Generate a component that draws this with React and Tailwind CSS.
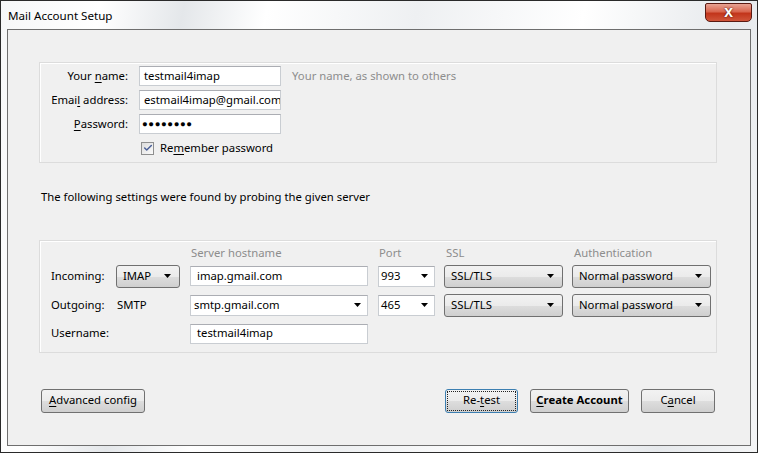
import { Check } from "lucide-react";

const font = "font-['Segoe_UI','Noto_Sans',sans-serif]";

const Arrow = () => (
  <svg width="7" height="4" viewBox="0 0 7 4" className="shrink-0">
    <path d="M0 0h7L3.5 4z" fill="#000" />
  </svg>
);

const U = ({ children }) => <span className="underline underline-offset-2">{children}</span>;

const TextBox = ({ value, className = "" }) => (
  <div className={`h-[20px] bg-white border border-[#c9cdd2] border-t-[#abadb3] px-[4px] flex items-center text-black ${className}`}>
    {value}
  </div>
);

const ComboBox = ({ value, className = "" }) => (
  <div className={`h-[21px] bg-white border border-[#c9cdd2] border-t-[#abadb3] pl-[2px] pr-[6px] flex items-center justify-between text-black ${className}`}>
    <span>{value}</span>
    <Arrow />
  </div>
);

const DropButton = ({ value, className = "" }) => (
  <div className={`h-[23px] rounded-[3px] border border-[#707070] bg-[linear-gradient(#f2f2f2_0%,#ebebeb_50%,#dddddd_51%,#cfcfcf_100%)] pl-[6px] pr-[8px] flex items-center justify-between text-black ${className}`}>
    <span>{value}</span>
    <Arrow />
  </div>
);

const Button = ({ children, className = "", focused }) => (
  <button
    className={`h-[24px] rounded-[3px] border ${focused ? "border-[#3c7fb1]" : "border-[#707070]"} bg-[linear-gradient(#f2f2f2_0%,#ebebeb_50%,#dddddd_51%,#cfcfcf_100%)] flex items-center justify-center text-black p-[2px] ${className}`}
  >
    <span className={`w-full h-full flex items-center justify-center ${focused ? "outline-1 outline-dotted outline-[#222]" : ""}`}>
      {children}
    </span>
  </button>
);

export default function App() {
  return (
    <div className={`${font} text-[11.3px] w-[758px] h-[453px] border border-[#2a2a2a] flex flex-col bg-[linear-gradient(100deg,#f6f7f8_0%,#ffffff_12%,#e4e7ea_22%,#ffffff_32%,#eef0f2_50%,#ffffff_70%,#e6e9ec_88%,#f4f5f6_100%)]`}>
      {/* title bar */}
      <div className="h-[28px] flex items-start justify-between pl-[7px] pr-[5px]">
        <div className="mt-[6px] text-[11.6px] text-black">Mail Account Setup</div>
        <div className="w-[47px] h-[19px] mt-[2px] rounded-b-[5px] rounded-t-[2px] border border-[#5a1a12] bg-[linear-gradient(#e8a393_0%,#d9664f_45%,#c2351b_55%,#d0553a_100%)] flex items-center justify-center">
          <span className="text-white font-bold text-[13px] leading-none [text-shadow:0_0_2px_#3a0a00]">X</span>
        </div>
      </div>

      {/* content */}
      <div className="flex-1 mx-[6px] mb-[6px] border border-[#6e6e6e] bg-[#f0f0f0] flex flex-col pl-[31px] pr-[33px] pt-[32px]">
        {/* identity fieldset */}
        <div className="h-[101px] border border-[#dcdcdc] shadow-[inset_1px_1px_0_#fff] flex flex-col pt-[3px]">
          <div className="grid grid-cols-[88px_142px_auto] gap-x-[11px] gap-y-[4px] items-center">
            <div className="text-right text-black">Your <U>n</U>ame:</div>
            <TextBox value="testmail4imap" />
            <div className="text-[#8d8d8d]">Your name, as shown to others</div>

            <div className="text-right text-black">Emai<U>l</U> address:</div>
            <TextBox value="estmail4imap@gmail.com" className="overflow-hidden whitespace-nowrap" />
            <div />

            <div className="text-right text-black"><U>P</U>assword:</div>
            <TextBox value="●●●●●●●●" className="text-[9.5px] tracking-[0.6px] pl-[2px]" />
            <div />
          </div>
          <div className="flex items-center ml-[101px] mt-[6px] gap-[6px]">
            <div className="w-[13px] h-[13px] border border-[#8e8f8f] bg-[linear-gradient(135deg,#dcdcdc,#fbfbfb)] flex items-center justify-center">
              <Check size={10} strokeWidth={3.5} color="#4a5f97" />
            </div>
            <span className="text-black">Re<U>m</U>ember password</span>
          </div>
        </div>

        <div className="mt-[26px] ml-[2px] text-black">The following settings were found by probing the given server</div>

        {/* server fieldset */}
        <div className="mt-[34px] h-[113px] border border-[#dcdcdc] shadow-[inset_1px_1px_0_#fff] pl-[11px] pt-[4px]">
          <div className="grid grid-cols-[56px_65px_178px_58px_119px_139px] gap-x-[9px] items-center">
            <div />
            <div />
            <div className="text-[#8d8d8d] pl-[1px] h-[16px]">Server hostname</div>
            <div className="text-[#8d8d8d] pl-[2px]">Port</div>
            <div className="text-[#8d8d8d] pl-[2px]">SSL</div>
            <div className="text-[#8d8d8d] pl-[2px]">Authentication</div>

            <div className="text-black mt-[3px]">Incoming:</div>
            <DropButton value="IMAP" className="w-[64px] mt-[3px]" />
            <TextBox value="imap.gmail.com" className="mt-[3px] pl-[6px]" />
            <ComboBox value="993" className="mt-[3px] ml-[1px]" />
            <DropButton value="SSL/TLS" className="mt-[3px]" />
            <DropButton value="Normal password" className="mt-[3px] pl-[4px]" />

            <div className="text-black mt-[6px]">Outgoing:</div>
            <div className="text-black mt-[6px] pl-[1px]">SMTP</div>
            <ComboBox value="smtp.gmail.com" className="mt-[6px] h-[21px] pl-[3px]" />
            <ComboBox value="465" className="mt-[6px] ml-[1px]" />
            <DropButton value="SSL/TLS" className="mt-[6px]" />
            <DropButton value="Normal password" className="mt-[6px] pl-[4px]" />

            <div className="text-black mt-[7px] col-span-2">Username:</div>
            <TextBox value="testmail4imap" className="mt-[7px] pl-[6px]" />
          </div>
        </div>

        {/* buttons */}
        <div className="mt-[36px] flex items-center pl-[2px] pr-[2px]">
          <Button className="w-[104px]"><U>A</U>dvanced config</Button>
          <div className="flex-1" />
          <Button className="w-[73px]" focused>Re-<U>t</U>est</Button>
          <Button className="w-[99px] ml-[12px] font-bold"><U>C</U>reate Account</Button>
          <Button className="w-[74px] ml-[12px]">C<U>a</U>ncel</Button>
        </div>
      </div>
    </div>
  );
}
